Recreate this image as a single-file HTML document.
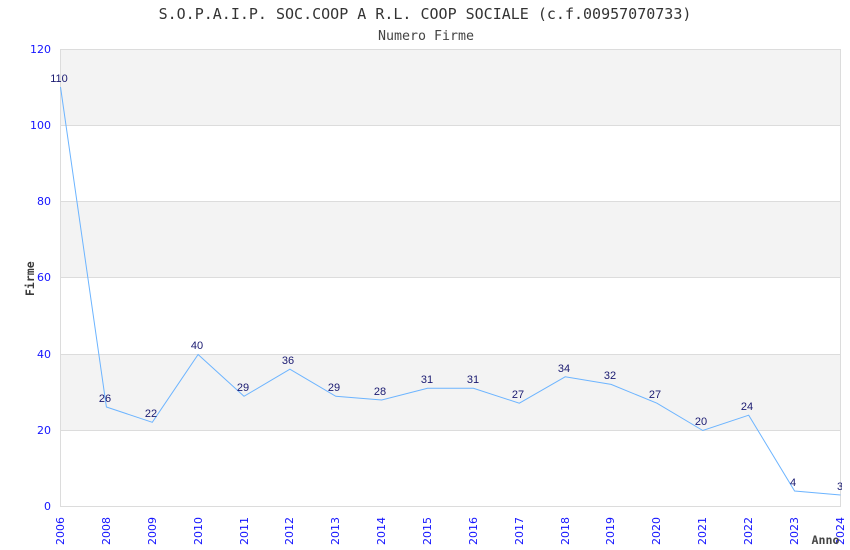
<!DOCTYPE html>
<html>
<head>
<meta charset="utf-8">
<style>
html,body{margin:0;padding:0;background:#fff;width:850px;height:550px;overflow:hidden}
svg{display:block}
.t{font-family:"DejaVu Sans Mono",monospace}
.a{font-family:"DejaVu Sans",sans-serif;font-size:11px;fill:#1414ff}
.d{font-family:"Liberation Sans",sans-serif;font-size:11px;fill:#191970;text-anchor:middle}
</style>
</head>
<body>
<svg width="850" height="550" viewBox="0 0 850 550" xmlns="http://www.w3.org/2000/svg">
<defs><clipPath id="c"><rect x="0" y="0" width="842" height="550"/></clipPath></defs>
<rect width="850" height="550" fill="#fff"/>
<rect x="60" y="49" width="780" height="76" fill="#f3f3f3"/>
<rect x="60" y="201" width="780" height="76" fill="#f3f3f3"/>
<rect x="60" y="354" width="780" height="76" fill="#f3f3f3"/>
<g stroke="#dcdcdc" stroke-width="1" shape-rendering="crispEdges">
<line x1="60" y1="49.5" x2="841" y2="49.5"/>
<line x1="60" y1="125.5" x2="841" y2="125.5"/>
<line x1="60" y1="201.5" x2="841" y2="201.5"/>
<line x1="60" y1="277.5" x2="841" y2="277.5"/>
<line x1="60" y1="354.5" x2="841" y2="354.5"/>
<line x1="60" y1="430.5" x2="841" y2="430.5"/>
<line x1="60" y1="506.5" x2="841" y2="506.5"/>
<line x1="60.5" y1="49" x2="60.5" y2="507"/>
<line x1="840.5" y1="49" x2="840.5" y2="507"/>
</g>
<polyline fill="none" stroke="#6cb4ff" stroke-width="1" points="60.5,87 106.4,407 152.3,422.3 198.1,354.5 244,396.3 289.9,369.2 335.8,396.3 381.7,400 427.5,388.3 473.4,388.3 519.3,403.2 565.2,376.8 611.1,384.4 656.9,403.2 702.8,430.5 748.7,415.2 794.6,491 840.5,495"/>
<text class="t" x="425" y="19" font-size="15" fill="#333" text-anchor="middle">S.O.P.A.I.P. SOC.COOP A R.L. COOP SOCIALE (c.f.00957070733)</text>
<text class="t" x="426" y="40" font-size="13.3" fill="#444" text-anchor="middle">Numero Firme</text>
<g class="a" text-anchor="end">
<text x="51" y="53">120</text>
<text x="51" y="129">100</text>
<text x="51" y="205">80</text>
<text x="51" y="281">60</text>
<text x="51" y="358">40</text>
<text x="51" y="434">20</text>
<text x="51" y="510">0</text>
</g>
<g class="a">
<text transform="translate(64,545) rotate(-90)">2006</text>
<text transform="translate(110,545) rotate(-90)">2008</text>
<text transform="translate(156,545) rotate(-90)">2009</text>
<text transform="translate(202,545) rotate(-90)">2010</text>
<text transform="translate(248,545) rotate(-90)">2011</text>
<text transform="translate(293,545) rotate(-90)">2012</text>
<text transform="translate(339,545) rotate(-90)">2013</text>
<text transform="translate(385,545) rotate(-90)">2014</text>
<text transform="translate(431,545) rotate(-90)">2015</text>
<text transform="translate(477,545) rotate(-90)">2016</text>
<text transform="translate(523,545) rotate(-90)">2017</text>
<text transform="translate(569,545) rotate(-90)">2018</text>
<text transform="translate(614,545) rotate(-90)">2019</text>
<text transform="translate(660,545) rotate(-90)">2020</text>
<text transform="translate(706,545) rotate(-90)">2021</text>
<text transform="translate(752,545) rotate(-90)">2022</text>
<text transform="translate(798,545) rotate(-90)">2023</text>
<text transform="translate(844,545) rotate(-90)">2024</text>
</g>
<g class="d" clip-path="url(#c)">
<text x="59" y="82">110</text>
<text x="105" y="402">26</text>
<text x="151" y="417">22</text>
<text x="197" y="349">40</text>
<text x="243" y="391">29</text>
<text x="288" y="364">36</text>
<text x="334" y="391">29</text>
<text x="380" y="395">28</text>
<text x="427" y="383">31</text>
<text x="473" y="383">31</text>
<text x="518" y="398">27</text>
<text x="564" y="372">34</text>
<text x="610" y="379">32</text>
<text x="655" y="398">27</text>
<text x="701" y="425">20</text>
<text x="747" y="410">24</text>
<text x="793" y="486">4</text>
<text x="840" y="490">3</text>
</g>
<text class="t" font-size="11.5" fill="#3a3a3a" font-weight="bold" transform="translate(34,296) rotate(-90)">Firme</text>
<text class="t" x="811.5" y="544" font-size="11.6" fill="#444" font-weight="bold">Anno</text>
</svg>
</body>
</html>
